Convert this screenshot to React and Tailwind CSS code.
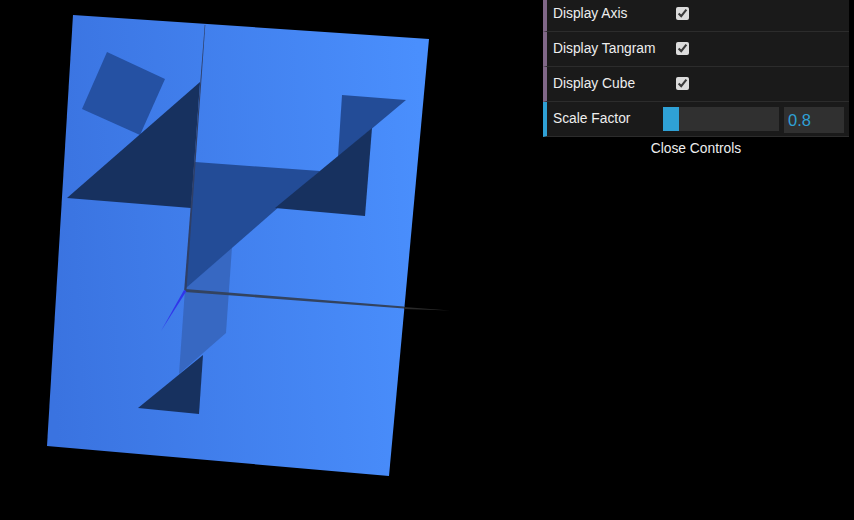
import React from "react";

const rows = ["Display Axis", "Display Tangram", "Display Cube"];

const Scene = () => (
  <svg className="absolute inset-0" width="854" height="520" viewBox="0 0 854 520">
    <defs>
      <linearGradient id="plane" gradientUnits="userSpaceOnUse" x1="47" y1="260" x2="429" y2="240">
        <stop offset="0" stopColor="#3a73e0" />
        <stop offset="1" stopColor="#4a8ffd" />
      </linearGradient>
    </defs>
    <polygon points="73,15 429,39 389,476 47,446" fill="url(#plane)" />
    <polygon points="107,52 165,79 140,135 82,109" fill="#2551a3" />
    <polygon points="232,247 226,333 179,374 185,289" fill="#3768c2" />
    <polygon points="195,162 320,171 185,289" fill="#234c97" />
    <polygon points="342,95 406,100 338,157" fill="#234c97" />
    <polygon points="200,82 191,208 67,198" fill="#17315f" />
    <polygon points="372,128 365,216 275,208" fill="#17315f" />
    <polygon points="203,355 199,414 138,408" fill="#17315f" />
    <polygon points="204.7,25 205.3,25 186.5,290 184.2,290" fill="#2f3f66" />
    <polygon points="185,289 404,306.5 404,308.5 185,292" fill="#33435f" />
    <polygon points="404,307 450,310.5 404,309" fill="#2a2a2a" />
    <polygon points="184,290 186.5,291 161,331" fill="#3035ea" />
  </svg>
);

const Row = ({ label }) => (
  <div className="flex h-[35px] items-center border-b border-l-4 border-b-[#2c2c2c] border-l-[#806787] pl-[6px]">
    <span className="w-[123px] shrink-0">{label}</span>
    <input type="checkbox" checked readOnly className="m-0 mb-[2px] h-[13px] w-[13px] accent-[#dcdcdc]" />
  </div>
);

export default function App() {
  return (
    <div className="relative h-[520px] w-[854px] overflow-hidden bg-black font-['Liberation_Sans',Arial,sans-serif] text-[13.8px] text-[#eeeeee]">
      <Scene />
      <div className="absolute top-[-3px] right-[5px] w-[306px]">
        <div className="bg-[#1a1a1a]">
          {rows.map((label) => (
            <Row key={label} label={label} />
          ))}
          <div className="flex h-[35px] items-center border-b border-l-4 border-b-[#2c2c2c] border-l-[#2fa1d6] pl-[6px]">
            <span className="w-[110px] shrink-0">Scale Factor</span>
            <div className="h-[24px] w-[116px] shrink-0 self-start mt-[5px] bg-[#303030]">
              <div className="h-full w-[16px] bg-[#2fa1d6]" />
            </div>
            <div className="ml-[5px] h-[26px] w-[60px] self-start mt-[5px] bg-[#303030] pl-[4px] text-[16.5px] leading-[27px] text-[#2fa1d6]">
              0.8
            </div>
          </div>
        </div>
        <div className="h-[23px] text-center leading-[23px]">Close Controls</div>
      </div>
    </div>
  );
}
